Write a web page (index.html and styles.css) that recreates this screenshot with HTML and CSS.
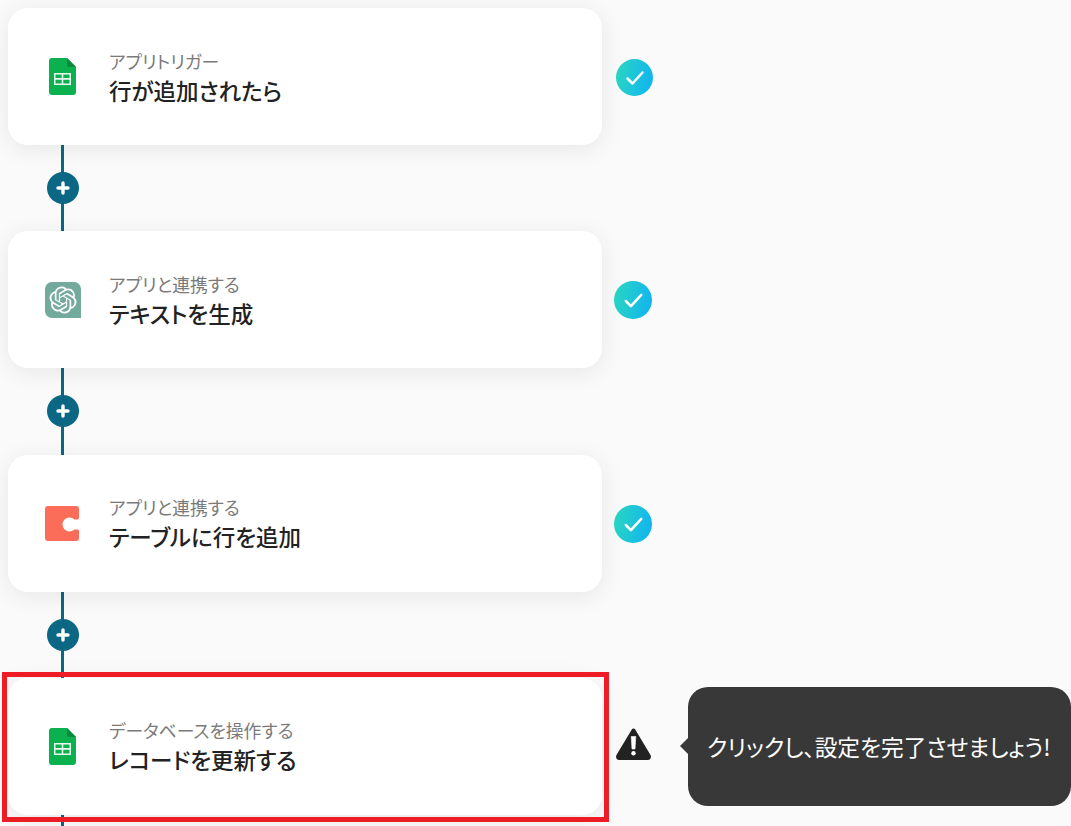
FILE: index.html
```html
<!DOCTYPE html>
<html lang="ja">
<head>
<meta charset="utf-8">
<title>フロー</title>
<link rel="stylesheet" href="styles.css">
</head>
<body>
<main class="flow">
  <section class="step">
    <div class="card">
      <span class="app-icon">
        <svg class="sheets" viewBox="0 0 27 37"><path d="M3 0H18L27 9V34a3 3 0 0 1-3 3H3a3 3 0 0 1-3-3V3a3 3 0 0 1 3-3Z" fill="#0bb04f"/><path d="M18 0L27 9H20a2 2 0 0 1-2-2Z" fill="#098a3c"/><path d="M5 15H22V27H5ZM6.5 16.5V20H12.7V16.5ZM14.3 16.5V20H20.5V16.5ZM6.5 21.8V25.5H12.7V21.8ZM14.3 21.8V25.5H20.5V21.8Z" fill="#e9f8ee" fill-rule="evenodd"/></svg>
      </span>
      <div class="card-text"><p class="label">アプリトリガー</p><h2 class="title">行が追加されたら</h2></div>
    </div>
    <span class="check check-first"><svg viewBox="0 0 37 37"><path d="M11.5 19.5L16.5 24.5L26.5 13.5" fill="none" stroke="#fff" stroke-width="2.5" stroke-linecap="round" stroke-linejoin="round"/></svg></span>
  </section>
  <div class="connector"><span class="plus"><svg viewBox="0 0 32 32"><path d="M16 11V21M11 16H21" stroke="#fff" stroke-width="3.4" stroke-linecap="round"/></svg></span></div>

  <section class="step">
    <div class="card">
      <span class="app-icon">
        <svg class="gpt" viewBox="0 0 36 36"><path d="M7 0H29a7 7 0 0 1 7 7V36H7a7 7 0 0 1-7-7V7a7 7 0 0 1 7-7Z" fill="#74aa9c"/><path transform="translate(4.5 4.5) scale(1.125)" fill="#fff" d="M22.2819 9.8211a5.9847 5.9847 0 0 0-.5157-4.9108 6.0462 6.0462 0 0 0-6.5098-2.9A6.0651 6.0651 0 0 0 4.9807 4.1818a5.9847 5.9847 0 0 0-3.9977 2.9 6.0462 6.0462 0 0 0 .7427 7.0966 5.98 5.98 0 0 0 .511 4.9107 6.051 6.051 0 0 0 6.5146 2.9001A5.9847 5.9847 0 0 0 13.2599 24a6.0557 6.0557 0 0 0 5.7718-4.2058 5.9894 5.9894 0 0 0 3.9977-2.9001 6.0557 6.0557 0 0 0-.7475-7.0729zm-9.022 12.6081a4.4755 4.4755 0 0 1-2.8764-1.0408l.1419-.0804 4.7783-2.7582a.7948.7948 0 0 0 .3927-.6813v-6.7369l2.02 1.1686a.071.071 0 0 1 .038.052v5.5826a4.504 4.504 0 0 1-4.4945 4.4944zm-9.6607-4.1254a4.4708 4.4708 0 0 1-.5346-3.0137l.142.0852 4.783 2.7582a.7712.7712 0 0 0 .7806 0l5.8428-3.3685v2.3324a.0804.0804 0 0 1-.0332.0615L9.74 19.9502a4.4992 4.4992 0 0 1-6.1408-1.6464zM2.3408 7.8956a4.485 4.485 0 0 1 2.3655-1.9728V11.6a.7664.7664 0 0 0 .3879.6765l5.8144 3.3543-2.0201 1.1685a.0757.0757 0 0 1-.071 0l-4.8303-2.7865A4.504 4.504 0 0 1 2.3408 7.872zm16.5963 3.8558L13.1038 8.364 15.1192 7.2a.0757.0757 0 0 1 .071 0l4.8303 2.7913a4.4944 4.4944 0 0 1-.6765 8.1042v-5.6772a.79.79 0 0 0-.407-.667zm2.0107-3.0231l-.142-.0852-4.7735-2.7818a.7759.7759 0 0 0-.7854 0L9.409 9.2297V6.8974a.0662.0662 0 0 1 .0284-.0615l4.8303-2.7866a4.4992 4.4992 0 0 1 6.6802 4.66zM8.3065 12.863l-2.02-1.1638a.0804.0804 0 0 1-.038-.0567V6.0742a4.4992 4.4992 0 0 1 7.3757-3.4537l-.142.0805L8.704 5.459a.7948.7948 0 0 0-.3927.6813zm1.0976-2.3654l2.602-1.4998 2.6069 1.4998v2.9994l-2.5974 1.4997-2.6067-1.4997Z"/></svg>
      </span>
      <div class="card-text"><p class="label">アプリと連携する</p><h2 class="title">テキストを生成</h2></div>
    </div>
    <span class="check"><svg viewBox="0 0 37 37"><path d="M11.5 19.5L16.5 24.5L26.5 13.5" fill="none" stroke="#fff" stroke-width="2.5" stroke-linecap="round" stroke-linejoin="round"/></svg></span>
  </section>
  <div class="connector"><span class="plus"><svg viewBox="0 0 32 32"><path d="M16 11V21M11 16H21" stroke="#fff" stroke-width="3.4" stroke-linecap="round"/></svg></span></div>

  <section class="step">
    <div class="card">
      <span class="app-icon">
        <svg class="coda" viewBox="0 0 34 35"><path d="M3 0H31a3 3 0 0 1 3 3V12a1.5 1.5 0 0 1-1.5 1.5H29.4A7 7 0 1 0 29.4 23.5H32.5a1.5 1.5 0 0 1 1.5 1.5V32a3 3 0 0 1-3 3H3a3 3 0 0 1-3-3V3a3 3 0 0 1 3-3Z" fill="#fb6c59"/></svg>
      </span>
      <div class="card-text"><p class="label">アプリと連携する</p><h2 class="title">テーブルに行を追加</h2></div>
    </div>
    <span class="check"><svg viewBox="0 0 37 37"><path d="M11.5 19.5L16.5 24.5L26.5 13.5" fill="none" stroke="#fff" stroke-width="2.5" stroke-linecap="round" stroke-linejoin="round"/></svg></span>
  </section>
  <div class="connector"><span class="plus"><svg viewBox="0 0 32 32"><path d="M16 11V21M11 16H21" stroke="#fff" stroke-width="3.4" stroke-linecap="round"/></svg></span></div>

  <section class="step">
    <div class="card card-alert">
      <span class="app-icon">
        <svg class="sheets" viewBox="0 0 27 37"><path d="M3 0H18L27 9V34a3 3 0 0 1-3 3H3a3 3 0 0 1-3-3V3a3 3 0 0 1 3-3Z" fill="#0bb04f"/><path d="M18 0L27 9H20a2 2 0 0 1-2-2Z" fill="#098a3c"/><path d="M5 15H22V27H5ZM6.5 16.5V20H12.7V16.5ZM14.3 16.5V20H20.5V16.5ZM6.5 21.8V25.5H12.7V21.8ZM14.3 21.8V25.5H20.5V21.8Z" fill="#e9f8ee" fill-rule="evenodd"/></svg>
      </span>
      <div class="card-text"><p class="label">データベースを操作する</p><h2 class="title">レコードを更新する</h2></div>
    </div>
    <svg class="warn" viewBox="0 0 37 34"><path d="M18.5 3.5L33.8 29a1.4 1.4 0 0 1-1.2 2.1H4.4a1.4 1.4 0 0 1-1.2-2.1Z" fill="#222" stroke="#222" stroke-width="4" stroke-linejoin="round"/><path d="M16.2 9.5H20.8L20 22H17Z" fill="#fff" stroke="#fff" stroke-width=".6" stroke-linejoin="round"/><circle cx="18.5" cy="26.2" r="2.2" fill="#fff"/></svg>
    <div class="tooltip">クリックし、設定を完了させましょう!</div>
  </section>
  <div class="connector"></div>
</main>
</body>
</html>
```
FILE: styles.css
```css
html, body {
  margin: 0;
  height: 826px;
  overflow: hidden;
  background: #fafafa;
}
body {
  padding: 8px;
  box-sizing: border-box;
  font-family: "Noto Sans CJK JP", "Noto Sans", sans-serif;
  color: #222;
}
.flow {
  display: flex;
  flex-direction: column;
  width: 1080px;
  height: 810px;
}
.step {
  flex: none;
  display: flex;
  align-items: center;
  height: 137px;
}
.card {
  position: relative;
  flex: none;
  width: 594px;
  height: 137px;
  display: flex;
  align-items: center;
  background: #fff;
  border-radius: 20px;
  box-shadow: 0 4px 24px rgba(0, 0, 0, .08);
}
.card-alert::after {
  content: "";
  position: absolute;
  inset: -6px -7px -7px -6px;
  border: 5px solid #ee1c25;
  pointer-events: none;
}
.app-icon {
  flex: none;
  width: 36px;
  height: 37px;
  margin-left: 37px;
  display: flex;
  align-items: center;
  justify-content: center;
}
.sheets { width: 27px; height: 37px; margin-left: -2px; }
.gpt { width: 36px; height: 36px; }
.coda { width: 34px; height: 35px; margin-left: -2px; }
.card-text { margin-left: 28px; margin-top: 1px; }
.label {
  margin: 0 0 1px;
  font-size: 17.8px;
  line-height: 24px;
  font-weight: 400;
  color: #7a7a7a;
  font-feature-settings: "palt";
}
.title {
  margin: 0;
  font-size: 22.5px;
  line-height: 32px;
  font-weight: 500;
  color: #222;
  font-feature-settings: "palt";
}
.check {
  flex: none;
  width: 38px;
  height: 38px;
  margin: 1px 0 0 12px;
  border-radius: 50%;
  background: linear-gradient(100deg, #2bd8c0, #0fb2f2);
}
.check svg { display: block; width: 100%; height: 100%; }
.check-first { margin-left: 14px; width: 37px; height: 37px; }
.warn {
  flex: none;
  width: 37px;
  height: 34px;
  margin: 0 0 4px 13px;
}
.tooltip {
  position: relative;
  flex: none;
  box-sizing: border-box;
  width: 383px;
  height: 119px;
  margin-left: 36px;
  padding: 0 19px;
  display: flex;
  align-items: center;
  background: #383838;
  border-radius: 20px;
  color: #fff;
  font-size: 22.7px;
  font-feature-settings: "palt";
  white-space: nowrap;
}
.tooltip::before {
  content: "";
  position: absolute;
  left: -8px;
  top: 50%;
  margin-top: -8px;
  width: 0;
  height: 0;
  border-style: solid;
  border-width: 8px 8px 8px 0;
  border-color: transparent #383838 transparent transparent;
}
.connector {
  flex: none;
  width: 32px;
  height: 86.33px;
  margin-left: 39px;
  display: flex;
  align-items: center;
  justify-content: center;
  background: linear-gradient(#0b6783, #0b6783) 14px 0 / 3px 100% no-repeat;
}
.plus {
  width: 32px;
  height: 32px;
  border-radius: 50%;
  background: #0b6783;
}
.plus svg { display: block; width: 100%; height: 100%; }
```
